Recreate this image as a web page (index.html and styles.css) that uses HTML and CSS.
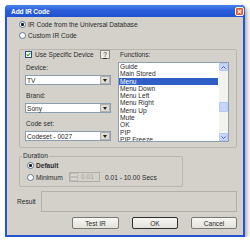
FILE: index.html
```html
<!DOCTYPE html>
<html>
<head>
    <title>Add IR Code</title>
    <link rel="stylesheet" href="styles.css">
</head>
<body>
    <div class="window">
        <div class="titlebar">
            <span class="title">Add IR Code</span>
            <span class="close">
                <svg width="9" height="9" viewBox="0 0 9 9">
                    <rect x="0.5" y="0.5" width="8" height="8" rx="1.5" fill="#e2582f" stroke="#ffffff" stroke-width="1"/>
                    <path d="M2.7 2.7 L6.3 6.3 M6.3 2.7 L2.7 6.3" stroke="#ffffff" stroke-width="1.2"/>
                </svg>
            </span>
        </div>
        <div class="client">
            <div class="option"><span class="radio checked"></span>IR Code from the Universal Database</div>
            <div class="option"><span class="radio"></span>Custom IR Code</div>

            <div class="group device-group">
                <div class="device-col">
                    <div class="check-row">
                        <span class="checkbox">
                            <svg width="5" height="5" viewBox="0 0 5 5">
                                <path d="M0.6 2.4 L1.9 3.8 L4.4 1" fill="none" stroke="#21a121" stroke-width="1.1"/>
                            </svg>
                        </span>
                        <span>Use Specific Device</span>
                        <span class="help-btn">?</span>
                    </div>

                    <div class="field-label first">Device:</div>
                    <div class="combo"><span class="combo-text">TV</span><span class="combo-btn"></span></div>

                    <div class="field-label">Brand:</div>
                    <div class="combo"><span class="combo-text">Sony</span><span class="combo-btn"></span></div>

                    <div class="field-label">Code set:</div>
                    <div class="combo"><span class="combo-text">Codeset - 0027</span><span class="combo-btn"></span></div>
                </div>

                <div class="functions-col">
                    <div class="list-label">Functions:</div>
                    <div class="listbox">
                        <ul class="items">
                            <li>Guide</li>
                            <li>Main Stored</li>
                            <li class="selected">Menu</li>
                            <li>Menu Down</li>
                            <li>Menu Left</li>
                            <li>Menu Right</li>
                            <li>Menu Up</li>
                            <li>Mute</li>
                            <li>OK</li>
                            <li>PIP</li>
                            <li>PIP Freeze</li>
                        </ul>
                        <div class="scrollbar">
                            <div class="scroll-btn">
                                <svg width="5" height="3" viewBox="0 0 5 3"><path d="M0.5 2.5 L2.5 0.5 L4.5 2.5" fill="none" stroke="#4d6185" stroke-width="1"/></svg>
                            </div>
                            <div class="scroll-track"><div class="thumb"></div></div>
                            <div class="scroll-btn">
                                <svg width="5" height="3" viewBox="0 0 5 3"><path d="M0.5 0.5 L2.5 2.5 L4.5 0.5" fill="none" stroke="#4d6185" stroke-width="1"/></svg>
                            </div>
                        </div>
                    </div>
                </div>
            </div>

            <fieldset class="group duration">
                <legend>Duration</legend>
                <div class="duration-row">
                    <span class="radio checked"></span><span class="default-label">Default</span>
                </div>
                <div class="duration-row min-row">
                    <span class="opt-label"><span class="radio"></span>Minimum</span>
                    <span class="spin">
                        <span class="spin-btns"><span class="spin-btn"></span><span class="spin-btn"></span></span>
                        <span class="spin-value">0.01</span>
                    </span>
                    <span class="range">0.01 - 10.00 Secs</span>
                </div>
            </fieldset>

            <div class="result-row">
                <span class="result-label">Result</span>
                <div class="result-box"></div>
            </div>

            <div class="buttons">
                <button class="test-btn">Test IR</button>
                <button class="ok-btn">OK</button>
                <button>Cancel</button>
            </div>
        </div>
    </div>
</body>
</html>
```

FILE: styles.css
```css
body {
    margin: 0;
    background-color: #ffffff;
    font-family: "Liberation Sans", Arial, sans-serif;
    font-size: 6.6px;
    color: #2a2a2a;
}

.window {
    width: 240px;
    height: 232px;
    margin: 5px 0 0 5px;
    box-sizing: border-box;
    background-color: #d4d1cb;
    border: 2px solid #2456d2;
    border-top: none;
    border-radius: 4px 4px 0 0;
    box-shadow: 2px 2px 4px rgba(0, 0, 0, 0.35);
}

.titlebar {
    height: 12px;
    margin: 0 -2px;
    padding: 0 1px 0 6px;
    display: flex;
    align-items: center;
    justify-content: space-between;
    background: linear-gradient(#4a82ec, #2a5edb 45%, #2151cf);
    border-radius: 4px 4px 0 0;
}

.title {
    color: #ffffff;
    font-weight: bold;
    font-size: 6.6px;
    letter-spacing: -0.1px;
}

.close {
    display: flex;
    width: 9px;
    height: 9px;
}

.client {
    padding: 2px 6px 0 12px;
}

.option {
    display: flex;
    align-items: center;
    height: 10px;
    margin-bottom: 1px;
}

.radio {
    width: 7px;
    height: 7px;
    margin-right: 2px;
    box-sizing: border-box;
    border: 1px solid #5f7896;
    border-radius: 50%;
    background: #ffffff;
    flex-shrink: 0;
}

.radio.checked {
    background: radial-gradient(circle, #1e1e1e 0 1.3px, #ffffff 1.8px);
}

.group {
    border: 1px solid #b9b6ae;
    border-radius: 2px;
}

.device-group {
    margin-top: 9px;
    display: flex;
    gap: 7px;
    padding: 0 7px 5px 5px;
}

.device-col {
    width: 86px;
}

.check-row {
    display: flex;
    align-items: center;
    height: 9px;
}

.checkbox {
    display: flex;
    align-items: center;
    justify-content: center;
    width: 7px;
    height: 7px;
    margin-right: 3px;
    box-sizing: border-box;
    border: 1px solid #1c5180;
    background: #ffffff;
}

.help-btn {
    margin-left: auto;
    margin-right: 1px;
    width: 10px;
    height: 9px;
    box-sizing: border-box;
    display: flex;
    align-items: center;
    justify-content: center;
    border: 1px solid #8a8780;
    background: #eceae5;
    text-decoration: underline;
}

.field-label {
    height: 8px;
    line-height: 8px;
    margin-top: 7px;
    padding-left: 1px;
}

.field-label.first {
    margin-top: 5px;
}

.combo {
    margin-top: 3px;
    height: 10px;
    display: flex;
    align-items: center;
    box-sizing: border-box;
    border: 1px solid #8c9eb4;
    background: #ffffff;
}

.combo-text {
    flex: 1;
    padding-left: 1px;
}

.combo-btn {
    width: 10px;
    height: 8px;
    box-sizing: border-box;
    display: flex;
    align-items: center;
    justify-content: center;
    background: #dedcd6;
    border: 1px solid #b4b1aa;
}

.combo-btn::after {
    content: "";
    border-left: 2.5px solid transparent;
    border-right: 2.5px solid transparent;
    border-top: 3px solid #202020;
}

.functions-col {
    width: 111px;
}

.list-label {
    height: 9px;
    line-height: 9px;
    padding-left: 2px;
}

.listbox {
    margin-top: 3px;
    height: 80px;
    display: flex;
    box-sizing: border-box;
    border: 1px solid #8c9eb4;
    background: #ffffff;
}

.items {
    flex: 1;
    margin: 0;
    padding: 0;
    list-style: none;
    overflow: hidden;
}

.items li {
    height: 7.3px;
    line-height: 7.3px;
    padding-left: 1px;
    white-space: nowrap;
}

.items li.selected {
    background: #2f5fc6;
    color: #ffffff;
    margin-right: 1px;
}

.scrollbar {
    width: 9px;
    display: flex;
    flex-direction: column;
    background: #f2f2ee;
}

.scroll-btn {
    height: 8px;
    box-sizing: border-box;
    display: flex;
    align-items: center;
    justify-content: center;
    background: #c6d5fb;
    border: 1px solid #b5c6ef;
    border-radius: 1px;
}

.scroll-track {
    flex: 1;
}

.thumb {
    margin-top: 31px;
    height: 10px;
    background: #c6d5fb;
    border: 1px solid #b5c6ef;
    border-radius: 1px;
    box-sizing: border-box;
}

.duration {
    margin: 4px 0 0;
    padding: 0 3px 3px 7px;
    width: 164px;
    box-sizing: border-box;
    min-width: 0;
}

.duration legend {
    padding: 0 1px;
    margin-left: -5px;
    line-height: 8px;
}

.duration-row {
    display: flex;
    align-items: center;
    height: 10px;
}

.min-row {
    height: 12px;
    margin-top: 1px;
}

.default-label {
    font-weight: bold;
}

.opt-label {
    width: 42px;
    display: flex;
    align-items: center;
}

.spin {
    width: 31px;
    height: 10px;
    display: flex;
    box-sizing: border-box;
    border: 1px solid #b0ada6;
}

.spin-btns {
    width: 8px;
    display: flex;
    flex-direction: column;
}

.spin-btn {
    flex: 1;
    border: 1px solid #c0bdb6;
    background: #d9d7d1;
}

.spin-value {
    padding-left: 3px;
    line-height: 8px;
    color: #a6a39c;
}

.range {
    margin-left: 5px;
}

.result-row {
    display: flex;
    align-items: center;
    height: 21px;
    margin: 4px 0 0 -2px;
}

.result-label {
    width: 24px;
}

.result-box {
    flex: 1;
    height: 21px;
    box-sizing: border-box;
    border: 1px solid #b3b0a9;
}

.buttons {
    display: flex;
    justify-content: flex-end;
    gap: 13px;
    margin-top: 5px;
}

button {
    width: 46px;
    height: 12px;
    padding: 0;
    font: inherit;
    color: #2a2a2a;
    border: 1px solid #7a7873;
    border-radius: 2px;
    background: linear-gradient(#f7f7f4, #e3e1db);
}

.test-btn {
    width: 47px;
}

.ok-btn {
    border-color: #2e2e2e;
}
```
